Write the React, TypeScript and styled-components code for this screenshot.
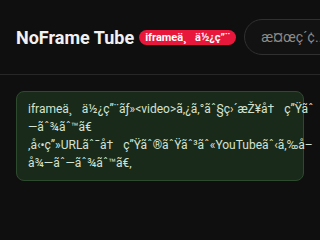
import React from "react";
import styled, { createGlobalStyle } from "styled-components";

const CP1252: Record<number, string> = {
  0x80: "\u20ac", 0x81: "\u02c6", 0x82: "\u201a", 0x83: "\u0192", 0x84: "\u201e", 0x85: "\u2026",
  0x86: "\u2020", 0x87: "\u2021", 0x88: "\u02c6", 0x89: "\u2030", 0x8a: "\u0160", 0x8b: "\u2039",
  0x8c: "\u0152", 0x8e: "\u017d", 0x8f: "", 0x91: "\u2018", 0x92: "\u2019", 0x93: "\u201c",
  0x94: "\u201d", 0x95: "\u2022", 0x96: "\u2013", 0x97: "\u2014", 0x98: "\u02dc", 0x99: "\u2122",
  0x9a: "\u0161", 0x9b: "\u203a", 0x9c: "\u0153", 0x9e: "\u017e", 0x9f: "\u0178",
};

const garble = (s: string) =>
  Array.from(new TextEncoder().encode(s))
    .map((b) => CP1252[b] ?? String.fromCharCode(b))
    .join("");

const Global = createGlobalStyle`
  html, body { margin: 0; padding: 0; background: #0f0f0f; overflow: hidden; }
  body { font-family: Roboto, "Noto Sans", sans-serif; color: #f1f1f1; }
`;

const Header = styled.header`
  display: flex;
  align-items: center;
  gap: 8px;
  padding: 19px 16px;
  border-bottom: 1px solid #272727;
  white-space: nowrap;
`;

const Brand = styled.div`
  display: flex;
  align-items: center;
  gap: 5px;
  flex-shrink: 0;
`;

const Title = styled.h1`
  margin: 0;
  font-size: 18px;
  font-weight: 700;
  color: #f1f1f1;
`;

const Badge = styled.span`
  display: inline-flex;
  align-items: center;
  height: 15px;
  padding: 0 6px;
  border-radius: 8px;
  background: #e8173c;
  color: #fff;
  font-size: 11px;
  font-weight: 700;
`;

const Search = styled.input`
  flex-shrink: 0;
  width: 220px;
  height: 36px;
  box-sizing: border-box;
  padding: 0 16px;
  border: 1px solid #303030;
  border-radius: 18px;
  background: #121212;
  color: #f1f1f1;
  font-family: Roboto, sans-serif;
  font-size: 14px;
  outline: none;
  &::placeholder { color: #8a8a8a; }
`;

const Main = styled.main`
  padding: 16px;
`;

const Notice = styled.div`
  padding: 8px 11px;
  border: 1px solid #2e4a2e;
  border-radius: 8px;
  background: #1a2a1a;
  color: #d2e2d2;
  font-size: 12px;
  line-height: 18px;
`;

export default function App() {
  return (
    <>
      <Global />
      <Header>
        <Brand>
          <Title>NoFrame Tube</Title>
          <Badge>{garble("iframe不使用")}</Badge>
        </Brand>
        <Search placeholder={garble("検索...")} />
      </Header>
      <Main>
        <Notice>
          {garble(
            "iframe不使用・<video>タグで直接再生します。動画URLは再生のたびにYouTubeから取得します。"
          )}
        </Notice>
      </Main>
    </>
  );
}
